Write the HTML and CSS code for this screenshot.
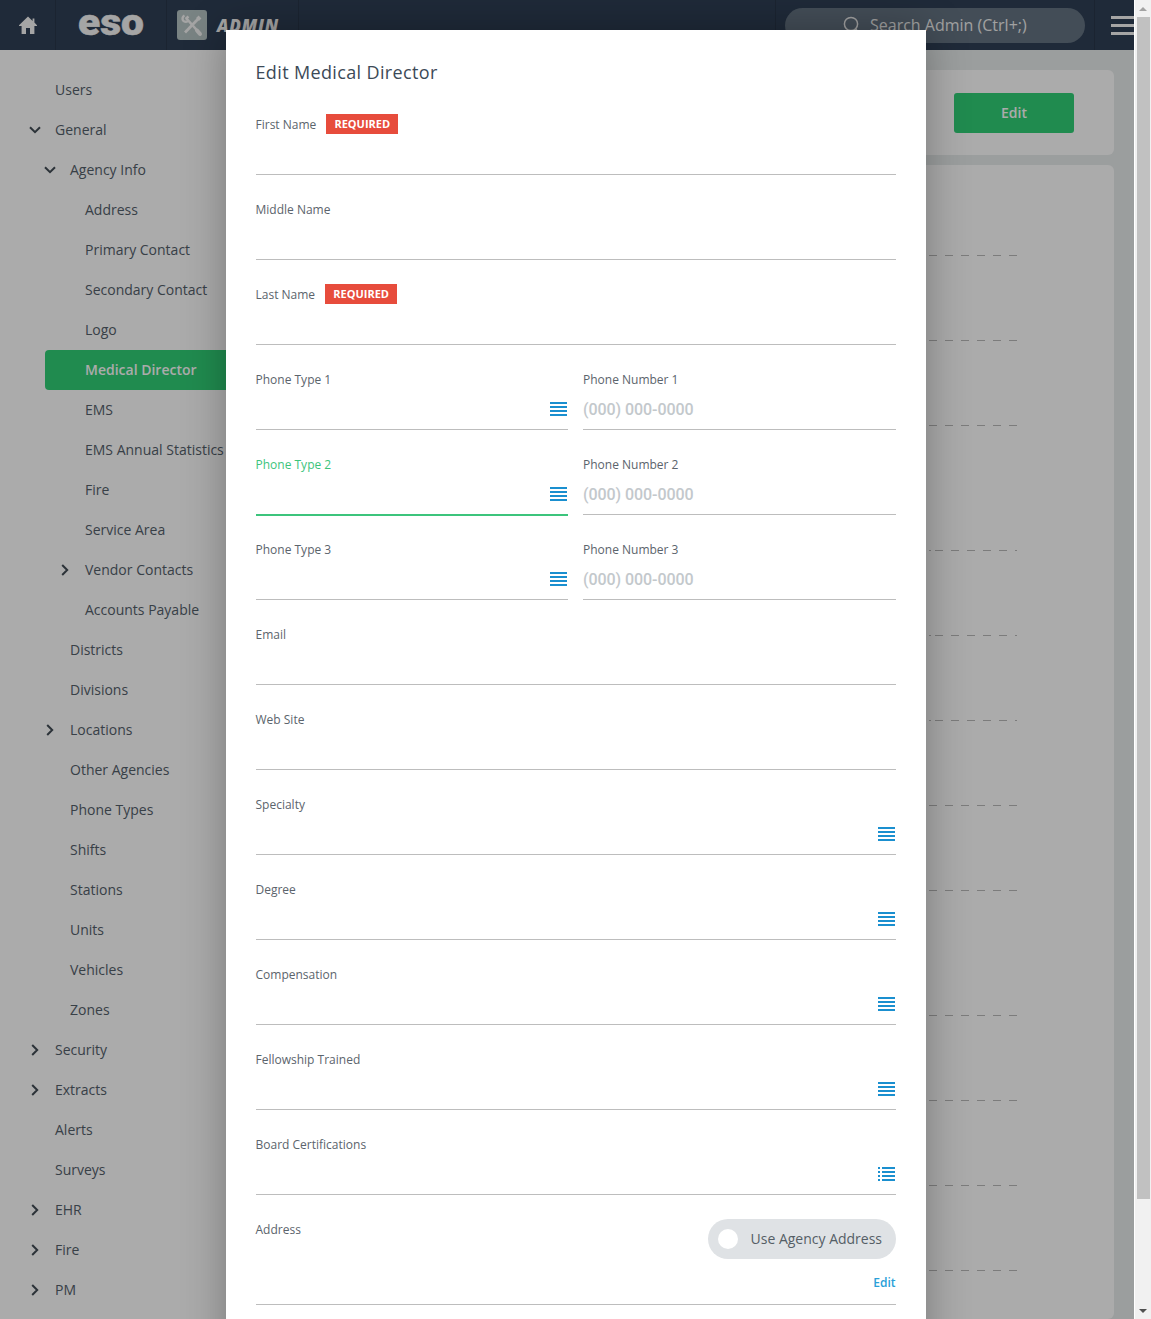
FILE: index.html
```html
<!DOCTYPE html>
<html lang="en">
<head>
<meta charset="utf-8">
<title>Edit Medical Director</title>
<link rel="stylesheet" href="styles.css">
</head>
<body>
<div class="window">
  <div class="app">
    <header class="topbar">
      <div class="home-cell">
        <svg class="home-icon" viewBox="0 0 18 18"><path d="M9 0.5 L13.6 4.9 V2.6 H15.4 V6.6 L18 9.2 V10 H15.4 V18 H11 V12 H7 V18 H2.6 V10 H0 V9.2 Z"/></svg>
      </div>
      <div class="logo-cell"><span class="logo-text">eso</span></div>
      <div class="admin-cell">
        <span class="admin-badge">
          <svg viewBox="0 0 30 30" class="admin-icon">
            <path class="tool-w" d="M9.5 8.5 L21.5 22"/>
            <path class="tool-w2" d="M20 20.5 L23 24"/>
            <path class="tool-s" d="M22 8 L8 22.5"/>
            <path class="tool-o" d="M7.5 5.5 A3.6 3.6 0 0 0 6 10.5 A3.8 3.8 0 0 0 11 11 M11.5 6.5 L8.5 9"/>
            <path class="tool-s2" d="M23 7 L20.5 9.5"/>
          </svg>
        </span>
        <span class="admin-text">ADMIN</span>
      </div>
      <div class="spacer"></div>
      <div class="search-cell">
        <div class="search-pill">
          <svg class="search-icon" viewBox="0 0 18 18"><circle cx="8" cy="8" r="6.6"/><path d="M12.6 12.8 L15.8 17"/></svg>
          <span class="search-text">Search Admin (Ctrl+;)</span>
        </div>
      </div>
      <div class="menu-cell"><span class="burger"><i></i><i></i><i></i></span></div>
    </header>
    <div class="content">
      <nav class="sidebar">
        <a class="nav l0">Users</a>
        <a class="nav l0 down"><svg class="chev" viewBox="0 0 12 8"><path d="M1 1.2 L6 6.2 L11 1.2"/></svg>General</a>
        <a class="nav l1 down"><svg class="chev" viewBox="0 0 12 8"><path d="M1 1.2 L6 6.2 L11 1.2"/></svg>Agency Info</a>
        <a class="nav l2">Address</a>
        <a class="nav l2">Primary Contact</a>
        <a class="nav l2">Secondary Contact</a>
        <a class="nav l2">Logo</a>
        <a class="nav l2 active">Medical Director</a>
        <a class="nav l2">EMS</a>
        <a class="nav l2">EMS Annual Statistics</a>
        <a class="nav l2">Fire</a>
        <a class="nav l2">Service Area</a>
        <a class="nav l2 right"><svg class="chev" viewBox="0 0 8 12"><path d="M1.2 1 L6.2 6 L1.2 11"/></svg>Vendor Contacts</a>
        <a class="nav l2">Accounts Payable</a>
        <a class="nav l1">Districts</a>
        <a class="nav l1">Divisions</a>
        <a class="nav l1 right"><svg class="chev" viewBox="0 0 8 12"><path d="M1.2 1 L6.2 6 L1.2 11"/></svg>Locations</a>
        <a class="nav l1">Other Agencies</a>
        <a class="nav l1">Phone Types</a>
        <a class="nav l1">Shifts</a>
        <a class="nav l1">Stations</a>
        <a class="nav l1">Units</a>
        <a class="nav l1">Vehicles</a>
        <a class="nav l1">Zones</a>
        <a class="nav l0 right"><svg class="chev" viewBox="0 0 8 12"><path d="M1.2 1 L6.2 6 L1.2 11"/></svg>Security</a>
        <a class="nav l0 right"><svg class="chev" viewBox="0 0 8 12"><path d="M1.2 1 L6.2 6 L1.2 11"/></svg>Extracts</a>
        <a class="nav l0">Alerts</a>
        <a class="nav l0">Surveys</a>
        <a class="nav l0 right"><svg class="chev" viewBox="0 0 8 12"><path d="M1.2 1 L6.2 6 L1.2 11"/></svg>EHR</a>
        <a class="nav l0 right"><svg class="chev" viewBox="0 0 8 12"><path d="M1.2 1 L6.2 6 L1.2 11"/></svg>Fire</a>
        <a class="nav l0 right"><svg class="chev" viewBox="0 0 8 12"><path d="M1.2 1 L6.2 6 L1.2 11"/></svg>PM</a>
      </nav>
      <main class="main">
        <section class="card action-card"><button class="edit-btn">Edit</button></section>
        <section class="card rows-card">
          <div class="row"><span class="dash"></span></div>
          <div class="row"><span class="dash"></span></div>
          <div class="row"><span class="dash"></span></div>
          <div class="row tall"><span class="dash shift"></span></div>
          <div class="row"><span class="dash shift"></span></div>
          <div class="row"><span class="dash shift"></span></div>
          <div class="row"><span class="dash"></span></div>
          <div class="row"><span class="dash"></span></div>
          <div class="row tall"><span class="dash"></span></div>
          <div class="row"><span class="dash"></span></div>
          <div class="row"><span class="dash"></span></div>
          <div class="row"><span class="dash"></span></div>
        </section>
      </main>
    </div>
    <div class="dim"></div>
    <div class="modal">
      <h1 class="modal-title">Edit Medical Director</h1>
      <div class="field"><div class="label-row"><label>First Name</label><span class="req">REQUIRED</span></div><div class="control"></div></div>
      <div class="field"><div class="label-row"><label>Middle Name</label></div><div class="control"></div></div>
      <div class="field"><div class="label-row"><label>Last Name</label><span class="req">REQUIRED</span></div><div class="control"></div></div>
      <div class="field-pair">
        <div class="field"><div class="label-row"><label>Phone Type 1</label></div><div class="control end"><svg class="lines" viewBox="0 0 17 14" preserveAspectRatio="none"><path d="M0 1h17M0 5h17M0 9h17M0 13h17"/></svg></div></div>
        <div class="field"><div class="label-row"><label>Phone Number 1</label></div><div class="control"><input class="phone" placeholder="(000) 000-0000"></div></div>
      </div>
      <div class="field-pair">
        <div class="field focused"><div class="label-row"><label>Phone Type 2</label></div><div class="control end"><svg class="lines" viewBox="0 0 17 14" preserveAspectRatio="none"><path d="M0 1h17M0 5h17M0 9h17M0 13h17"/></svg></div></div>
        <div class="field"><div class="label-row"><label>Phone Number 2</label></div><div class="control"><input class="phone" placeholder="(000) 000-0000"></div></div>
      </div>
      <div class="field-pair">
        <div class="field"><div class="label-row"><label>Phone Type 3</label></div><div class="control end"><svg class="lines" viewBox="0 0 17 14" preserveAspectRatio="none"><path d="M0 1h17M0 5h17M0 9h17M0 13h17"/></svg></div></div>
        <div class="field"><div class="label-row"><label>Phone Number 3</label></div><div class="control"><input class="phone" placeholder="(000) 000-0000"></div></div>
      </div>
      <div class="field"><div class="label-row"><label>Email</label></div><div class="control"></div></div>
      <div class="field"><div class="label-row"><label>Web Site</label></div><div class="control"></div></div>
      <div class="field"><div class="label-row"><label>Specialty</label></div><div class="control end"><svg class="lines" viewBox="0 0 17 14" preserveAspectRatio="none"><path d="M0 1h17M0 5h17M0 9h17M0 13h17"/></svg></div></div>
      <div class="field"><div class="label-row"><label>Degree</label></div><div class="control end"><svg class="lines" viewBox="0 0 17 14" preserveAspectRatio="none"><path d="M0 1h17M0 5h17M0 9h17M0 13h17"/></svg></div></div>
      <div class="field"><div class="label-row"><label>Compensation</label></div><div class="control end"><svg class="lines" viewBox="0 0 17 14" preserveAspectRatio="none"><path d="M0 1h17M0 5h17M0 9h17M0 13h17"/></svg></div></div>
      <div class="field"><div class="label-row"><label>Fellowship Trained</label></div><div class="control end"><svg class="lines" viewBox="0 0 17 14" preserveAspectRatio="none"><path d="M0 1h17M0 5h17M0 9h17M0 13h17"/></svg></div></div>
      <div class="field"><div class="label-row"><label>Board Certifications</label></div><div class="control end"><svg class="lines" viewBox="0 0 17 14" preserveAspectRatio="none"><path d="M0 1h2M4 1h13M0 5h2M4 5h13M0 9h2M4 9h13M0 13h2M4 13h13"/></svg></div></div>
      <div class="field address">
        <div class="address-top">
          <label>Address</label>
          <div class="toggle"><span class="knob"></span><span class="toggle-text">Use Agency Address</span></div>
        </div>
        <div class="address-edit"><a class="edit-link">Edit</a></div>
      </div>
    </div>
  </div>
  <div class="scrollbar">
    <span class="arrow up"></span>
    <span class="thumb"></span>
    <span class="arrow down"></span>
  </div>
</div>
</body>
</html>
```
FILE: styles.css
```css
* { box-sizing: border-box; }
html, body { margin: 0; height: 100%; overflow: hidden; }
body { font-family: "Open Sans", sans-serif; background: #fff; }

.window { display: flex; width: 1151px; height: 1319px; overflow: hidden; }
.app { position: relative; width: 1134px; height: 100%; overflow: hidden; display: flex; flex-direction: column; }

/* top bar */
.topbar { display: flex; flex: none; height: 50px; background: #2f3f55; }
.home-cell { flex: none; width: 56px; display: flex; align-items: center; justify-content: center; border-right: 1px solid #293749; }
.home-icon { width: 18px; height: 18px; fill: #f6f6f6; }
.logo-cell { flex: none; width: 111px; display: flex; align-items: center; justify-content: center; border-right: 1px solid #293749; }
.logo-text { font-family: Roboto, sans-serif; font-weight: 900; font-size: 37px; line-height: 44px; color: #f6f6f6; -webkit-text-stroke: 0.5px #f6f6f6; transform: scaleX(1.1) translateY(-2px); }
.admin-cell { flex: none; width: 132px; display: flex; align-items: center; padding-left: 10px; gap: 10px; border-right: 1px solid #293749; }
.admin-badge { width: 30px; height: 30px; background: #b5c3c3; border-radius: 3px; display: block; }
.admin-icon { display: block; width: 30px; height: 30px; fill: none; stroke: #f6f6f6; }
.tool-w { stroke-width: 2.6; }
.tool-w2 { stroke-width: 4; stroke-linecap: round; }
.tool-s { stroke-width: 2.8; }
.tool-s2 { stroke-width: 4; }
.tool-o { stroke-width: 2.4; }
.admin-text { font-weight: 800; font-style: italic; font-size: 17px; color: #f6f6f6; letter-spacing: 0.8px; }
.spacer { flex: 1; }
.search-cell { flex: none; width: 320px; padding: 8px 9px; border-left: 1px solid #293749; border-right: 1px solid #293749; }
.search-pill { height: 35px; width: 300px; padding-bottom: 2px; background: #647382; border-radius: 18px; display: flex; align-items: center; padding-left: 58px; gap: 9px; }
.search-icon { width: 18px; height: 18px; fill: none; stroke: #f0f0f0; stroke-width: 1.5; flex: none; }
.search-text { font-size: 16px; color: #f0f0f0; white-space: nowrap; }
.menu-cell { flex: none; width: 39px; display: flex; align-items: center; padding-left: 16px; }
.burger { display: flex; flex-direction: column; gap: 5px; width: 24px; flex: none; }
.burger i { display: block; height: 3px; background: #f6f6f6; }

/* sidebar */
.content { flex: 1; display: flex; min-height: 0; }
.sidebar { flex: none; width: 240px; padding-top: 20px; background: #fff; }
.nav { display: flex; align-items: center; height: 40px; padding-bottom: 2px; font-size: 14px; color: #54606b; white-space: nowrap; }
.l0 { padding-left: 55px; }
.l1 { padding-left: 70px; }
.l2 { padding-left: 85px; }
.chev { fill: none; stroke: #424c55; stroke-width: 2; flex: none; position: relative; top: 1px; }
.down .chev { width: 12px; height: 8px; margin-left: -26px; margin-right: 14px; }
.right .chev { width: 8px; height: 12px; margin-left: -24px; margin-right: 16px; }
.active { margin-left: 45px; padding-left: 40px; background: #31cf76; color: #fff; font-weight: 600; border-radius: 4px 0 0 4px; }

/* main */
.main { flex: 1; min-width: 0; background: #e8ecec; padding: 20px 20px 0 0; display: flex; flex-direction: column; gap: 10px; }
.card { background: #fff; border-radius: 6px; }
.action-card { flex: none; height: 85px; display: flex; justify-content: flex-end; align-items: center; padding-right: 40px; }
.edit-btn { width: 120px; height: 40px; border: 0; border-radius: 3px; background: #31cf76; color: #fff; font: 600 14px "Open Sans", sans-serif; padding: 0; }
.rows-card { flex: 1; padding-top: 6px; }
.row { height: 85px; display: flex; align-items: flex-end; padding-left: 689px; }
.tall { height: 125px; }
.dash { display: block; width: 88px; height: 1px; margin-bottom: 0; background: repeating-linear-gradient(90deg, #b9b9b9 0 8px, transparent 8px 16px); }
.dash.shift { background: repeating-linear-gradient(90deg, #b9b9b9 0 2px, transparent 2px 6px, #b9b9b9 6px 14px, transparent 14px 22px, #b9b9b9 22px 30px, transparent 30px 38px, #b9b9b9 38px 46px, transparent 46px 54px, #b9b9b9 54px 62px, transparent 62px 70px, #b9b9b9 70px 78px, transparent 78px 86px, #b9b9b9 86px 88px); }

/* overlay and modal */
.dim { position: absolute; inset: 0; background: rgba(0, 0, 0, 0.33); }
.modal { position: absolute; left: 225.5px; top: 30px; width: 700px; height: 1400px; padding: 0 30px; background: #fff; box-shadow: 0 0 40px rgba(0, 0, 0, 0.3); }
.modal-title { margin: 0; height: 60px; padding-top: 29px; font-size: 18px; line-height: 26px; font-weight: 400; letter-spacing: 0.36px; color: #3c4a57; }

.field { height: 85px; padding-top: 24px; border-bottom: 1px solid #bdbdbd; }
.label-row { height: 20px; display: flex; align-items: center; gap: 10px; }
label { font-size: 12px; line-height: 20px; color: #5b646c; padding-top: 2px; }
.req { height: 20px; width: 72px; background: #e74c3c; color: #fff; font-size: 11px; font-weight: 700; line-height: 20px; text-align: center; }
.control { height: 40px; display: flex; align-items: center; }
.control.end { justify-content: flex-end; }
.lines { width: 17px; height: 14px; fill: none; stroke: #1a8fcf; stroke-width: 2.2; margin-right: 1px; }
.field-pair { display: grid; grid-template-columns: 1fr 1fr; gap: 15px; }
.focused { height: 86px; margin-bottom: -1px; border-bottom: 2px solid #3cc47c; }
.focused label { color: #3cc47c; }
.phone { width: 100%; border: 0; padding: 0; outline: 0; background: transparent; font: 500 16px Roboto, sans-serif; letter-spacing: -0.07px; color: #555; }
.phone::placeholder { color: #c3c8cc; opacity: 1; }
.address { height: 110px; }
.address-top { display: flex; justify-content: space-between; align-items: flex-start; height: 40px; }
.address-top label { padding-top: 1px; }
.toggle { width: 188px; height: 40px; margin-top: 0; border-radius: 20px; background: #dfe2e5; display: flex; align-items: center; padding: 0 0 2px 10px; gap: 13px; }
.knob { width: 20px; height: 20px; border-radius: 50%; background: #fff; flex: none; position: relative; top: 1px; }
.toggle-text { font-size: 14px; color: #555e66; white-space: nowrap; }
.address-edit { display: flex; justify-content: flex-end; height: 45px; padding-top: 15px; }
.edit-link { font-size: 12px; font-weight: 600; line-height: 18px; color: #2a9fd8; }

/* scrollbar */
.scrollbar { flex: none; width: 17px; height: 100%; background: #f1f1f1; border-left: 1px solid #fff; display: flex; flex-direction: column; align-items: center; }
.arrow { flex: none; width: 16px; height: 17px; display: flex; align-items: center; justify-content: center; }
.arrow.up::before { content: ""; border: 4px solid transparent; border-top: 0; border-bottom: 4px solid #a3a3a3; }
.arrow.down { margin-top: auto; }
.arrow.down::before { content: ""; border: 4px solid transparent; border-bottom: 0; border-top: 4px solid #505050; }
.thumb { flex: none; width: 13px; height: 1182px; background: #c1c1c1; }
```
